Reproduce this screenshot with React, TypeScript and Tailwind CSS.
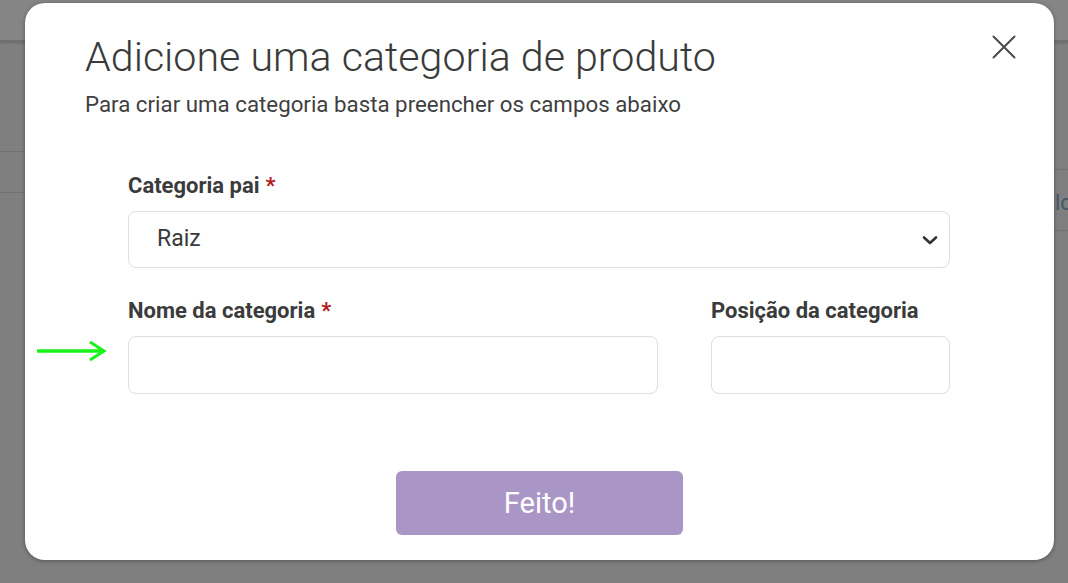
import React from 'react';

const CloseIcon: React.FunctionComponent = () => (
  <svg width="24" height="24" viewBox="0 0 24 24" fill="none" stroke="#4a4a4a" strokeWidth="2" strokeLinecap="round">
    <path d="M1.5 1.5L22.5 22.5M22.5 1.5L1.5 22.5" />
  </svg>
);

const Chevron: React.FunctionComponent = () => (
  <svg width="18" height="12" viewBox="0 0 18 12" fill="none" stroke="#333" strokeWidth="2.6" strokeLinecap="round" strokeLinejoin="round">
    <path d="M3 3.5l6 5.5 6-5.5" />
  </svg>
);

const Field: React.FunctionComponent<{ label: string; required?: boolean; className?: string; children: React.ReactNode }> = ({
  label,
  required,
  className,
  children,
}) => (
  <div className={`flex flex-col gap-[12px] ${className ?? ''}`}>
    <span className="text-[22px] font-bold text-[#3b3b3b] leading-[26px]">
      {label}
      {required && <span className="text-[#b01c1c] ml-[6px]">*</span>}
    </span>
    {children}
  </div>
);

const App: React.FunctionComponent = () => {
  return (
    <div className="relative w-[1068px] h-[583px] overflow-hidden bg-[#7f7f7f]" style={{ fontFamily: 'Roboto, "Liberation Sans", sans-serif' }}>
      {/* page underneath the overlay */}
      <div className="h-[42px] bg-[#858585] border-b-[2px] border-[#707070] shadow-[0_1px_2px_rgba(0,0,0,0.2)]" />
      <div className="h-[109px]" />
      <div className="flex justify-between">
        <div className="w-[25px] border-t border-[#727272] h-[42px] border-b" />
        <div className="w-[14px] mt-[18px] h-[62px] border-t border-b border-[#727272] flex items-center pt-[6px]">
          <span className="text-[22px] text-[#47576a] leading-none pl-[1px]">lc</span>
        </div>
      </div>

      {/* modal */}
      <div className="absolute left-[25px] top-[3px] w-[1029px] h-[557px] bg-white rounded-[20px] shadow-[0_1px_4px_rgba(0,0,0,0.35)] flex flex-col">
        <div className="flex justify-between pl-[60px] pr-[35px] pt-[30px]">
          <div className="flex flex-col">
            <h1 className="text-[41.2px] font-light text-[#3a3a3a] leading-[48px]">Adicione uma categoria de produto</h1>
            <p className="text-[22.3px] text-[#3f3f3f] leading-[26px] mt-[10px]">Para criar uma categoria basta preencher os campos abaixo</p>
          </div>
          <button className="-mt-[1px] h-[30px] w-[30px] flex items-center justify-center">
            <CloseIcon />
          </button>
        </div>

        <div className="w-[822px] ml-[103px] mt-[56px] flex flex-col gap-[30px]">
          <Field label="Categoria pai" required>
            <div className="h-[57px] rounded-[8px] border border-[#dedede] flex items-center justify-between pl-[28px] pr-[10px]">
              <span className="text-[23px] text-[#3a3a3a]">Raiz</span>
              <Chevron />
            </div>
          </Field>
          <div className="flex gap-[53px]">
            <Field label="Nome da categoria" required className="flex-1">
              <div className="h-[58px] rounded-[8px] border border-[#dedede]" />
            </Field>
            <Field label="Posição da categoria" className="w-[239px]">
              <div className="h-[58px] rounded-[8px] border border-[#dedede]" />
            </Field>
          </div>
        </div>

        <button className="mx-auto mt-[77px] w-[287px] h-[64px] rounded-[6px] bg-[#a996c6] text-white text-[29px] leading-none">
          Feito!
        </button>
      </div>

      {/* annotation arrow */}
      <svg className="absolute left-[36px] top-[340px]" width="72" height="22" viewBox="0 0 72 22" fill="none">
        <path d="M1 11H66" stroke="#19f219" strokeWidth="3.5" />
        <path d="M54 2L68 11L54 20" stroke="#19f219" strokeWidth="3" strokeLinejoin="miter" />
      </svg>
    </div>
  );
};

export default App;
